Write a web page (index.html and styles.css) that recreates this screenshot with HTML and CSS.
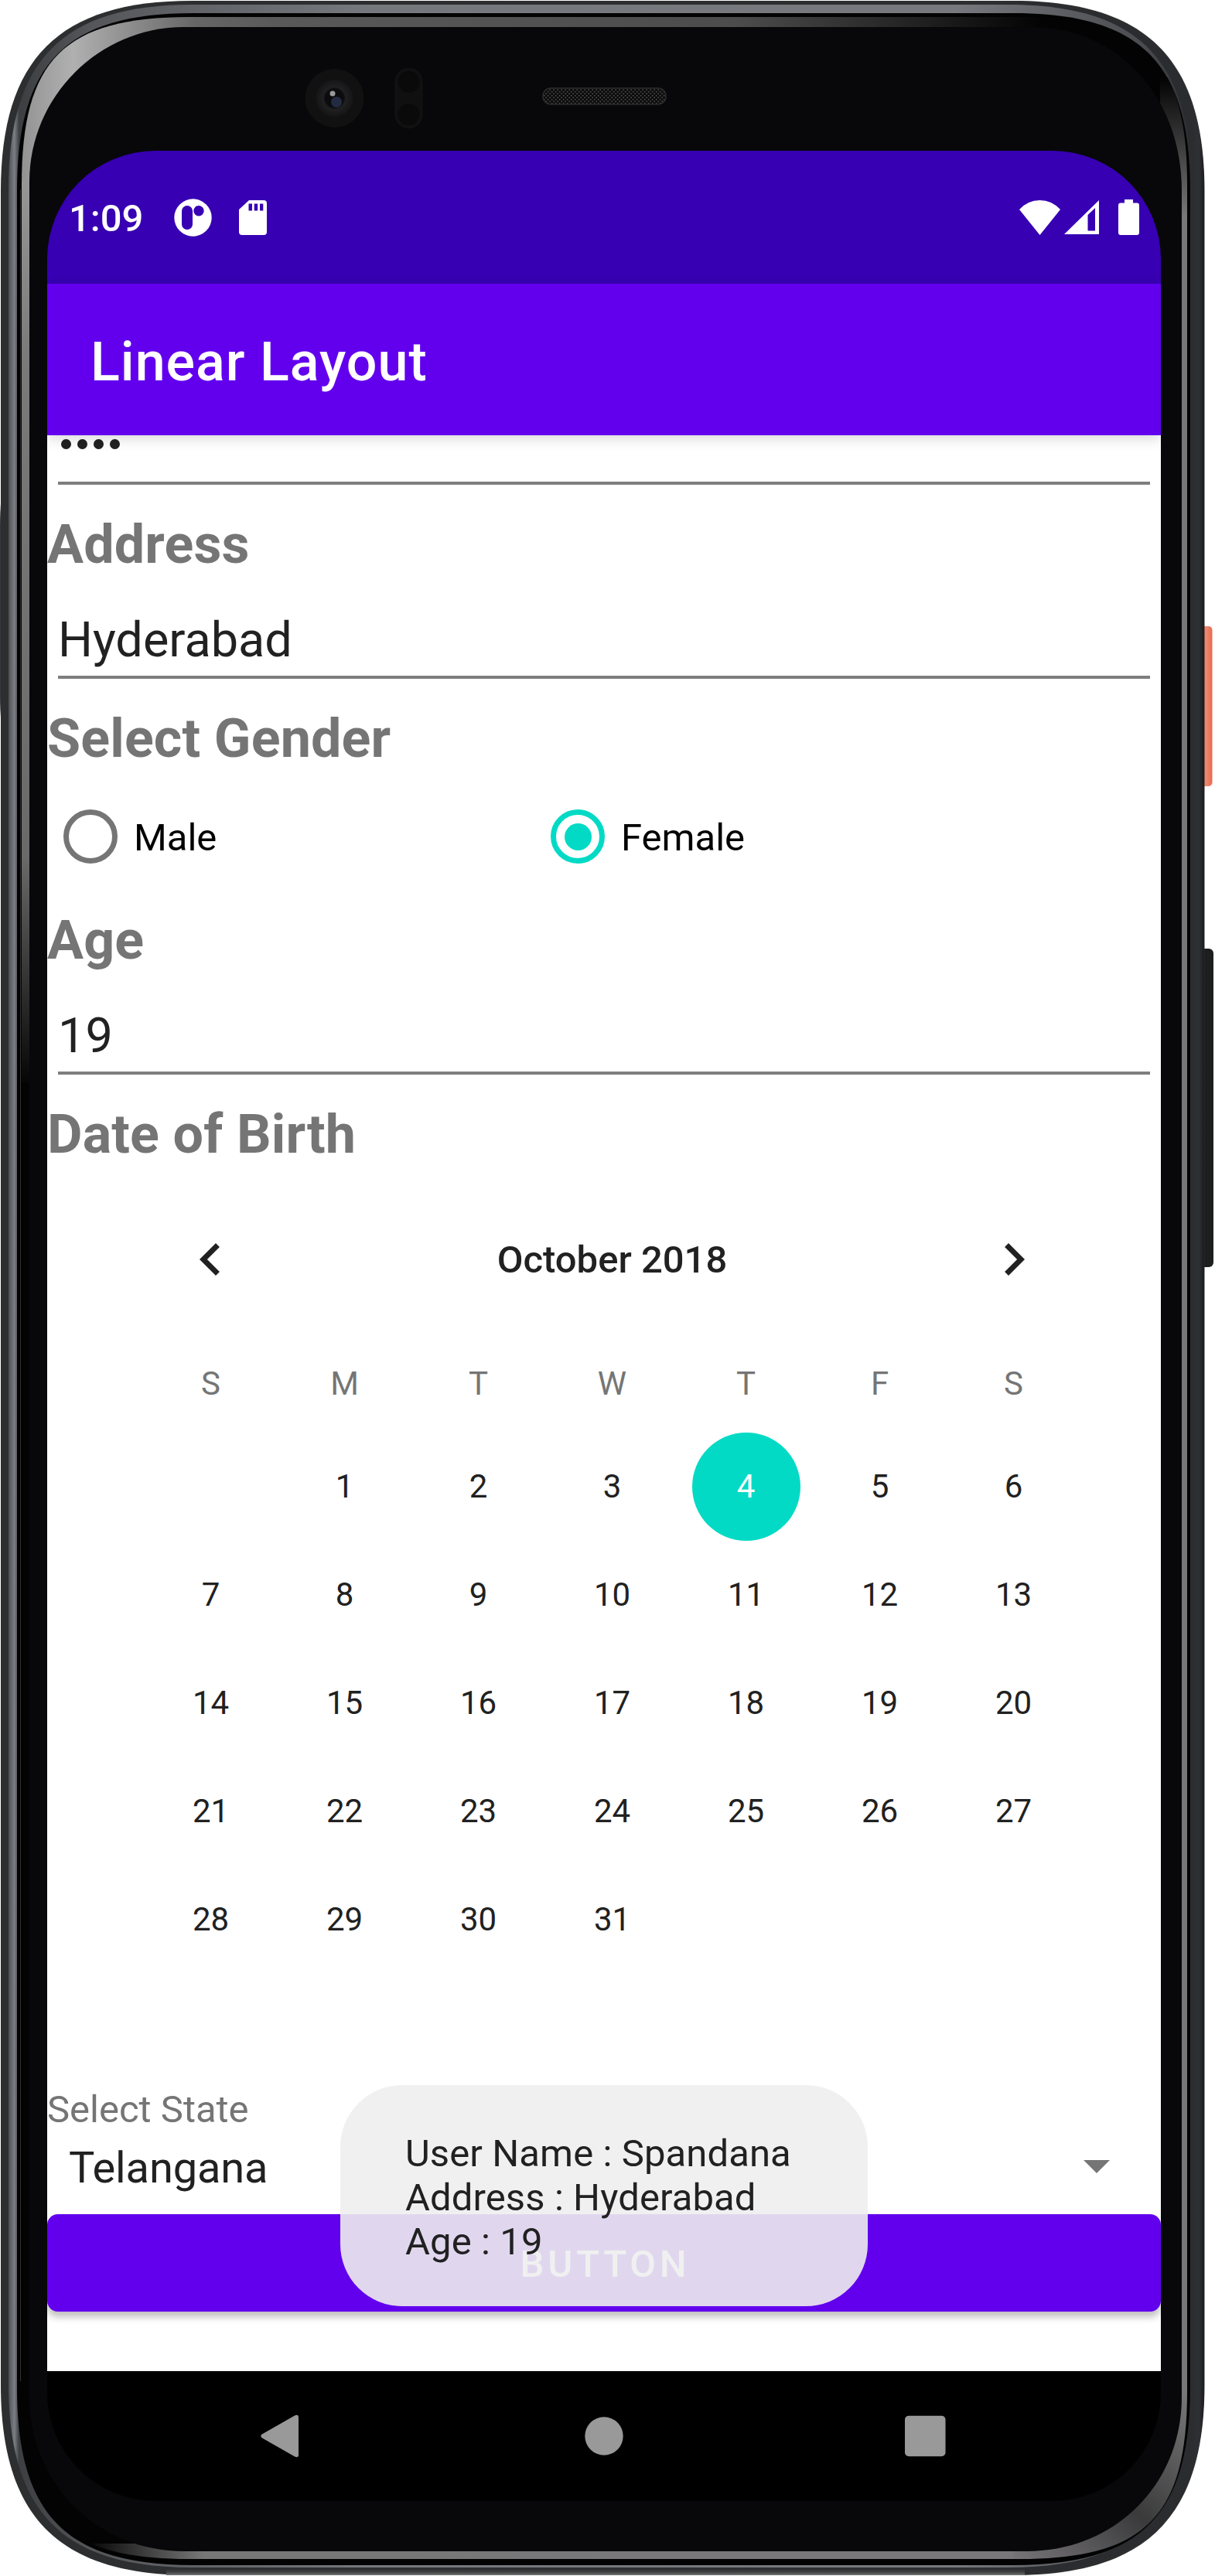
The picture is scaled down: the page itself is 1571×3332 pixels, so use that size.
FILE: index.html
```html
<!DOCTYPE html>
<html lang="en">
<head>
<meta charset="utf-8">
<title>Linear Layout</title>
<link rel="stylesheet" href="styles.css">
</head>
<body>
<div class="phone">
  <svg class="phone-body" viewBox="0 0 1571 3332" aria-hidden="true">
    <defs>
      <linearGradient id="power" x1="0" x2="1"><stop offset="0" stop-color="#d9583f"/><stop offset=".5" stop-color="#ee8a72"/><stop offset="1" stop-color="#e8694f"/></linearGradient>
      <linearGradient id="rim" gradientUnits="userSpaceOnUse" x1="1539" x2="1558" y1="0" y2="0"><stop offset="0" stop-color="#2a2c2f"/><stop offset=".6" stop-color="#2e3033"/><stop offset="1" stop-color="#17181a"/></linearGradient>
      <linearGradient id="silver" gradientUnits="userSpaceOnUse" x1="11" x2="1541" y1="0" y2="0"><stop offset="0" stop-color="#4c4f52"/><stop offset=".005" stop-color="#7b7e84"/><stop offset=".009" stop-color="#3c3e41"/><stop offset=".07" stop-color="#54565a"/><stop offset=".3" stop-color="#75787d"/><stop offset=".8" stop-color="#77797e"/><stop offset=".96" stop-color="#4a4b4f"/><stop offset="1" stop-color="#2b2d30"/></linearGradient>
      <linearGradient id="foot" x1="0" x2="0" y1="0" y2="1"><stop offset="0" stop-color="#2a2b2c" stop-opacity="0"/><stop offset=".7" stop-color="#4c4d4e"/><stop offset="1" stop-color="#777"/></linearGradient>
      <linearGradient id="glareTop" gradientUnits="userSpaceOnUse" x1="28" x2="1350" y1="0" y2="0"><stop offset="0" stop-color="#939393"/><stop offset=".05" stop-color="#b0b0b0"/><stop offset=".17" stop-color="#666"/><stop offset=".25" stop-color="#595959"/><stop offset=".7" stop-color="#4c4c4c"/><stop offset="1" stop-color="#030303"/></linearGradient>
      <linearGradient id="glareLeft" x1="0" x2="0" y1="0" y2="1"><stop offset="0" stop-color="#969696"/><stop offset=".2" stop-color="#7a7a7a"/><stop offset=".75" stop-color="#6a6a6a"/><stop offset="1" stop-color="#060606"/></linearGradient>
      <linearGradient id="glareRight" x1="0" x2="0" y1="0" y2="1"><stop offset="0" stop-color="#030303"/><stop offset=".06" stop-color="#777"/><stop offset="1" stop-color="#777"/></linearGradient>
      <linearGradient id="glareFoot" x1="0" x2="1"><stop offset="0" stop-color="#0a0a0a"/><stop offset=".12" stop-color="#777"/><stop offset="1" stop-color="#7a777b"/></linearGradient>
      <linearGradient id="glareCorner" x1="0" x2="1" y1="1" y2="0"><stop offset="0" stop-color="#7a777b"/><stop offset=".5" stop-color="#3a3a3b"/><stop offset="1" stop-color="#777"/></linearGradient>
      <radialGradient id="lens"><stop offset="0" stop-color="#0a0a0c"/><stop offset=".5" stop-color="#0c0c0e"/><stop offset=".6" stop-color="#202022"/><stop offset="1" stop-color="#151516"/></radialGradient>
      <pattern id="mesh" width="5" height="5" patternUnits="userSpaceOnUse"><rect width="5" height="5" fill="#0b0b0b"/><circle cx="1.2" cy="1.2" r="1" fill="#4a4a4a"/><circle cx="3.7" cy="3.7" r="1" fill="#4a4a4a"/></pattern>
      <clipPath id="bezel"><path d="M245 22H1318C1480 22 1535 77 1535 239V3093C1535 3255 1480 3310 1318 3310H245C83 3310 28 3255 28 3093V239C28 77 83 22 245 22Z"/></clipPath>
    </defs>
    <path d="M6 628Q0 640 0 680V900Q0 940 6 950Z" fill="#34383a"/>
    <rect x="1551" y="810" width="16.5" height="207" rx="5" fill="url(#power)"/>
    <rect x="1551" y="1227" width="18" height="412" rx="6" fill="#1d1e1e"/>
    <path d="M248 1H1310C1482 1 1557.500 76 1557.500 248V3084C1557.500 3256 1482 3331 1310 3331H248C76 3331 1 3256 1 3084V248C1 76 76 1 248 1Z" fill="#2c2e2f"/>
    <path d="M1300 3V3329C1482 3329 1557 3256 1557 3084V248C1557 76 1482 3 1300 3Z" fill="url(#rim)"/>
    <rect x="215" y="3321" width="1110" height="10" fill="url(#foot)"/>
    <path d="M249 6H1303C1471 6 1541 77 1541 245V3082C1541 3250 1471 3321 1303 3321H249C81 3321 11 3250 11 3082V245C11 77 81 6 249 6Z" fill="url(#silver)"/>
    <path d="M250 17H1310C1475 17 1539 82 1539 247V3088C1539 3253 1475 3318 1310 3318H250C85 3318 22 3253 22 3088V247C22 82 85 17 250 17Z" fill="#030303"/>
    <g clip-path="url(#bezel)">
      <rect x="28" y="22" width="1322" height="223" fill="url(#glareTop)"/>
      <rect x="28" y="235" width="30" height="1165" fill="url(#glareLeft)"/>
      <rect x="1500" y="100" width="36" height="3000" fill="url(#glareRight)"/>
      <path d="M1490 3100H1536V3310H1300V3200Z" fill="url(#glareCorner)"/>
      <rect x="120" y="3290" width="1190" height="20" fill="url(#glareFoot)"/>
    </g>
    <path d="M238 35H1335C1445 35 1528 125 1528 247V3100C1528 3215 1440 3300 1328 3300H238C128 3300 38 3215 38 3100V235C38 125 128 35 238 35Z" fill="#08080a"/>
    <path d="M26.500 245V3080" stroke="#303030"/>
    <circle cx="432.500" cy="127" r="38" fill="#111112"/>
    <circle cx="432.500" cy="127" r="24" fill="url(#lens)"/>
    <circle cx="435" cy="132" r="7" fill="#232b42"/>
    <circle cx="430" cy="121" r="3.500" fill="#999"/>
    <rect x="511" y="88.500" width="35" height="77" rx="17.500" fill="#101011" stroke="#151516"/>
    <circle cx="528.500" cy="106" r="14" fill="#0a0a0b"/>
    <circle cx="528.500" cy="148" r="14" fill="#0a0a0b"/>
    <rect x="702" y="114" width="159" height="21" rx="10" fill="url(#mesh)" stroke="#2b2b2b" stroke-width="1.500"/>
  </svg>

  <div class="screen">
    <header class="status-bar">
      <span class="clock">1:09</span>
      <svg class="icon-app" viewBox="0 0 49 49"><path fill="#fff" fill-rule="evenodd" d="M24.500 .3a24.200 24.200 0 1 0 0 48.400a24.200 24.200 0 1 0 0-48.400ZM17 9a7 7 0 0 1 7 7V33a7 7 0 0 1-14 0V16a7 7 0 0 1 7-7ZM32 9a6.700 6.700 0 1 1 0 13.400a6.700 6.700 0 1 1 0-13.400Z"/></svg>
      <svg class="icon-sd" viewBox="0 0 36 45"><path fill="#fff" fill-rule="evenodd" d="M13 0H32a4 4 0 0 1 4 4V41a4 4 0 0 1-4 4H4a4 4 0 0 1-4-4V12ZM12.500 4.500V13.500H17V4.500ZM19.700 4.500V13.500H24.200V4.500ZM27 4.500V13.500H31.300V4.500Z"/></svg>
      <span class="spacer"></span>
      <svg class="icon-wifi" viewBox="0 0 53 45"><path fill="#fff" d="M0 12Q11 0 26.500 0T53 12L26.500 45Z"/></svg>
      <svg class="icon-signal" viewBox="0 0 45 44"><path fill="#fff" fill-rule="evenodd" d="M0 44L45 0V44ZM30.500 19V39.500H40V10Z"/></svg>
      <svg class="icon-battery" viewBox="0 0 27 46"><path fill="#fff" d="M8 0H19V4.500H24a3 3 0 0 1 3 3V43a3 3 0 0 1-3 3H3a3 3 0 0 1-3-3V7.500a3 3 0 0 1 3-3H8Z"/></svg>
    </header>
    <div class="app-bar">Linear Layout</div>

    <main class="form">
      <div class="field password"><i class="dot"></i><i class="dot"></i><i class="dot"></i><i class="dot"></i></div>
      <div class="label">Address</div>
      <div class="field">Hyderabad</div>
      <div class="label">Select Gender</div>
      <div class="radios">
        <div class="radio"><span class="ring"></span><span class="radio-text">Male</span></div>
        <div class="radio checked"><span class="ring"></span><span class="radio-text">Female</span></div>
      </div>
      <div class="label">Age</div>
      <div class="field">19</div>
      <div class="label">Date of Birth</div>

      <section class="calendar">
        <div class="month">
          <svg class="chevron" viewBox="0 0 24 24"><path fill="#212121" d="M15.410 7.410L14 6l-6 6 6 6 1.410-1.410L10.830 12z"/></svg>
          <span>October 2018</span>
          <svg class="chevron" viewBox="0 0 24 24"><path fill="#212121" d="M10 6L8.590 7.410 13.170 12l-4.580 4.590L10 18l6-6z"/></svg>
        </div>
        <div class="weekdays"><span>S</span><span>M</span><span>T</span><span>W</span><span>T</span><span>F</span><span>S</span></div>
        <div class="days">
          <span></span><span>1</span><span>2</span><span>3</span><span class="selected">4</span><span>5</span><span>6</span>
          <span>7</span><span>8</span><span>9</span><span>10</span><span>11</span><span>12</span><span>13</span>
          <span>14</span><span>15</span><span>16</span><span>17</span><span>18</span><span>19</span><span>20</span>
          <span>21</span><span>22</span><span>23</span><span>24</span><span>25</span><span>26</span><span>27</span>
          <span>28</span><span>29</span><span>30</span><span>31</span>
        </div>
      </section>

      <div class="state-label">Select State</div>
      <div class="spinner"><span>Telangana</span><i class="caret"></i></div>
      <div class="button">BUTTON</div>
    </main>

    <nav class="nav-bar">
      <svg viewBox="0 0 56 56"><path fill="#999" d="M2 25.500L44 1.500Q49 -1 49 4V52Q49 57 44 54.500L2 30.500Q-1.500 28 2 25.500Z"/></svg>
      <svg viewBox="0 0 56 56"><circle cx="28" cy="28" r="24.700" fill="#999"/></svg>
      <svg viewBox="0 0 56 56"><rect x="1" y="1.700" width="52.500" height="52.500" rx="5" fill="#999"/></svg>
    </nav>

    <div class="toast">User Name : Spandana<br>Address : Hyderabad<br>Age : 19</div>
  </div>
</div>
</body>
</html>
```
FILE: styles.css
```css
* { box-sizing: border-box; }

body {
  margin: 0;
  background: #fff;
  font-family: Roboto, "Liberation Sans", sans-serif;
  color: #212121;
}

.phone {
  position: relative;
  width: 1571px;
  height: 3332px;
  padding: 195px 70px 97px 61px;
}

.phone-body {
  position: absolute;
  inset: 0;
  width: 1571px;
  height: 3332px;
}

.screen {
  position: relative;
  display: flex;
  flex-direction: column;
  width: 1440px;
  height: 3040px;
  overflow: hidden;
  border-radius: 140px;
}

.status-bar {
  display: flex;
  align-items: center;
  height: 172px;
  padding: 0 28px;
  background: #3700b3;
  color: #fff;
  flex: none;
}

.clock {
  width: 136px;
  padding-top: 4px;
  font-size: 49px;
  font-weight: 500;
  line-height: 58px;
}

.spacer { flex: 1; }
.icon-app { width: 49px; height: 49px; }
.icon-sd { width: 36px; height: 45px; margin-left: 35px; }
.icon-wifi { width: 53px; height: 45px; margin-right: 5px; }
.icon-signal { width: 45px; height: 44px; margin-right: 25px; }
.icon-battery { width: 27px; height: 46px; }

.app-bar {
  position: relative;
  z-index: 1;
  flex: none;
  height: 196px;
  padding: 7px 56px 0;
  background: #6200ee;
  box-shadow: 0 4px 16px rgba(0, 0, 0, .16);
  color: #fff;
  font-size: 70px;
  font-weight: 500;
  letter-spacing: 1px;
  line-height: 189px;
}

.form {
  flex: none;
  height: 2504px;
  background: #fff;
}

.label {
  height: 93px;
  padding-top: 1px;
  color: #757575;
  font-size: 70px;
  font-weight: 700;
  letter-spacing: .15px;
  line-height: 93px;
}

.field {
  height: 128px;
  margin: 0 14px 30px;
  padding-top: 31px;
  border-bottom: 4px solid #7e7e7e;
  font-size: 63px;
  line-height: 94px;
}

.password {
  display: flex;
  gap: 8.500px;
  height: 64px;
  margin-bottom: 30px;
  padding: 5px 0 0 4px;
}

.dot {
  width: 12.600px;
  height: 13px;
  border-radius: 50%;
  background: #212121;
}

.radios {
  display: flex;
  height: 168px;
  padding: 0 0 6px 21px;
  color: #000;
}

.radio {
  display: flex;
  align-items: center;
  width: 630px;
}

.ring {
  display: flex;
  width: 70px;
  height: 70px;
  border: 7px solid #757575;
  border-radius: 50%;
}

.checked .ring { border-color: #03dac5; }

.checked .ring::after {
  content: "";
  width: 35px;
  height: 35px;
  margin: auto;
  border-radius: 50%;
  background: #03dac5;
}

.radio-text {
  margin-left: 21px;
  padding-top: 4px;
  font-size: 49px;
  line-height: 58px;
}

.calendar {
  width: 1211px;
  margin-left: 125px;
}

.month {
  display: flex;
  align-items: center;
  justify-content: space-between;
  height: 232px;
  padding: 0 44px;
  font-size: 49px;
  font-weight: 500;
}

.chevron { width: 84px; height: 84px; }

.weekdays,
.days {
  display: grid;
  grid-template-columns: repeat(7, 173px);
  justify-items: center;
  font-size: 42px;
  text-align: center;
}

.weekdays {
  height: 89px;
  color: #757575;
  line-height: 89px;
}

.days {
  grid-auto-rows: 140px;
  padding-top: 19px;
  line-height: 140px;
}

.selected {
  width: 140px;
  border-radius: 50%;
  background: #03dac5;
  color: #fff;
}

.state-label {
  height: 66px;
  margin-top: 142px;
  padding-top: 1px;
  color: #757575;
  font-size: 49px;
  line-height: 66px;
}

.spinner {
  display: flex;
  align-items: center;
  justify-content: space-between;
  height: 86px;
  margin-bottom: 17px;
  padding: 0 66px 0 28px;
  font-size: 56px;
  letter-spacing: -.15px;
}

.caret {
  margin-bottom: 3px;
  border: 17.500px solid transparent;
  border-top-color: #757575;
  border-bottom: 0;
}

.button {
  height: 126px;
  padding: 4px 0 0 3px;
  border-radius: 14px;
  background: #6200ee;
  box-shadow: 0 7px 10px rgba(0, 0, 0, .25);
  color: #fff;
  font-size: 49px;
  font-weight: 500;
  letter-spacing: 4.800px;
  line-height: 122px;
  text-align: center;
}

.nav-bar {
  display: flex;
  flex: none;
  align-items: center;
  height: 168px;
  padding-left: 276px;
  gap: 360px;
  background: #000;
}

.nav-bar svg { width: 56px; height: 56px; }

.toast {
  position: absolute;
  z-index: 2;
  left: 379px;
  top: 2502px;
  width: 682px;
  height: 286px;
  padding: 60px 84px;
  border-radius: 80px;
  background: rgba(238, 238, 238, .9);
  font-size: 49px;
  letter-spacing: .1px;
  line-height: 57px;
  white-space: nowrap;
}
```
